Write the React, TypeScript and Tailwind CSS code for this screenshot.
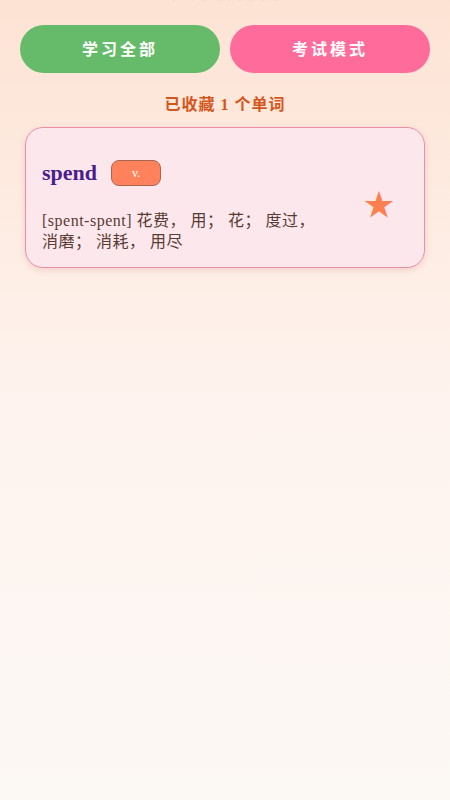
export default function App() {
  const serif = '"Liberation Serif", "Noto Sans CJK SC", serif';

  return (
    <div
      className="min-h-[800px] w-full overflow-hidden bg-gradient-to-b from-[#fde3d4] via-[#fef3ee] to-[#fcf8f4] px-5"
      style={{ fontFamily: serif }}
    >
      <h1 className="-mt-[16px] h-[20px] text-center text-[18px] leading-[20px] tracking-[6px] text-[#f7dccd]">
        单词收藏夹
      </h1>

      <div className="mt-[21px] flex gap-[10px]">
        <button className="h-[48px] flex-1 rounded-full bg-[#66bb6a] pt-[2px] text-[16px] font-bold tracking-[3px] text-white">
          学习全部
        </button>
        <button className="h-[48px] flex-1 rounded-full bg-[#ff6b9a] pt-[2px] text-[16px] font-bold tracking-[3px] text-white">
          考试模式
        </button>
      </div>

      <p className="mt-[21px] text-center text-[16px] font-bold leading-[22px] tracking-[1px] text-[#d4561c]">
        已收藏 1 个单词
      </p>

      <div className="mx-[5px] mt-[11px] flex items-center rounded-[18px] border border-[#e98fab] bg-[#fce8ec] pb-[15px] pl-[16px] pr-[30px] pt-[32px] shadow-[0_2px_6px_rgba(200,120,120,0.25)]">
        <div className="flex-1">
          <div className="flex items-center gap-[14px]">
            <span className="text-[22px] font-bold leading-[26px] text-[#4b1d8c]">spend</span>
            <span className="flex h-[26px] w-[50px] items-center justify-center rounded-[8px] border border-[#a86650] bg-[#ff825d] text-[12px] text-white">
              v.
            </span>
          </div>
          <p className="mt-[24px] max-w-[285px] text-[16px] leading-[21px] tracking-[0.5px] text-[#5a3b33]">
            [spent-spent] 花费， 用； 花； 度过， 消磨； 消耗， 用尽
          </p>
        </div>
        <span className="-mt-[2px] text-[30px] leading-none text-[#ff7f50]">★</span>
      </div>
    </div>
  );
}
